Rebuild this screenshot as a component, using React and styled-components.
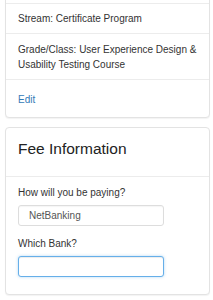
import React from 'react'
import styled, { createGlobalStyle } from 'styled-components'

const GlobalStyle = createGlobalStyle`
	body {
		margin: 0;
		background: #fff;
		font-family: "Liberation Sans", Arial, sans-serif;
		font-size: 10px;
		color: #333;
	}
	* { box-sizing: border-box; }
`

const details = [
	{ text: 'Stream: Certificate Program', pad: '7px 12px' },
	{ text: 'Grade/Class: User Experience Design & Usability Testing Course', pad: '8px 12px 7px' },
]

export default function App() {
	return (
		<>
			<GlobalStyle />
			<Page>
				<Card $top>
					{details.map((item, index) => (
						<Item key={index} $pad={item.pad}>{item.text}</Item>
					))}
					<Item $pad="12px 12px 10px">
						<EditLink href="#">Edit</EditLink>
					</Item>
				</Card>

				<Card>
					<CardHeader>
						<h3>Fee Information</h3>
					</CardHeader>
					<CardBody>
						<Field>
							<label htmlFor="paying">How will you be paying?</label>
							<Input id="paying" defaultValue="NetBanking" readOnly />
						</Field>
						<Field>
							<label htmlFor="bank">Which Bank?</label>
							<Input id="bank" $focused />
						</Field>
					</CardBody>
				</Card>
			</Page>
		</>
	)
}

const Page = styled.div`
	display: flex;
	flex-direction: column;
	gap: 9px;
	padding: 0 3px 20px 5px;
`

const Card = styled.div`
	background: #fff;
	border: 1px solid #e3e3e3;
	border-radius: 4px;
	box-shadow: 0 1px 1px rgba(0, 0, 0, 0.05);
	margin-top: ${p => (p.$top ? '-6px' : '0')};
	padding-top: ${p => (p.$top ? '8px' : '0')};
`

const Item = styled.div`
	border-top: 1px solid #ececec;
	padding: ${p => p.$pad};
	line-height: 15px;
`

const EditLink = styled.a`
	color: #337ab7;
	text-decoration: none;
`

const CardHeader = styled.div`
	border-bottom: 1px solid #ececec;
	padding: 11px 12px 17px;
	h3 {
		margin: 0;
		font-size: 15.5px;
		font-weight: 400;
		line-height: 20px;
		color: #222;
	}
`

const CardBody = styled.div`
	display: flex;
	flex-direction: column;
	gap: 10px;
	padding: 8px 12px 17px;
`

const Field = styled.div`
	display: flex;
	flex-direction: column;
	gap: 5px;
	label {
		line-height: 15px;
	}
`

const Input = styled.input`
	width: 146px;
	height: 21px;
	padding: 0 10px;
	font-family: "Liberation Sans", Arial, sans-serif;
	font-size: 10px;
	color: #555;
	background: #fff;
	border: 1px solid ${p => (p.$focused ? '#66afe9' : '#ddd')};
	border-radius: 3px;
	outline: none;
	box-shadow: ${p =>
		p.$focused
			? 'inset 0 1px 1px rgba(0,0,0,.075), 0 0 3px rgba(102,175,233,.5)'
			: 'inset 0 1px 1px rgba(0,0,0,.04)'};
`
